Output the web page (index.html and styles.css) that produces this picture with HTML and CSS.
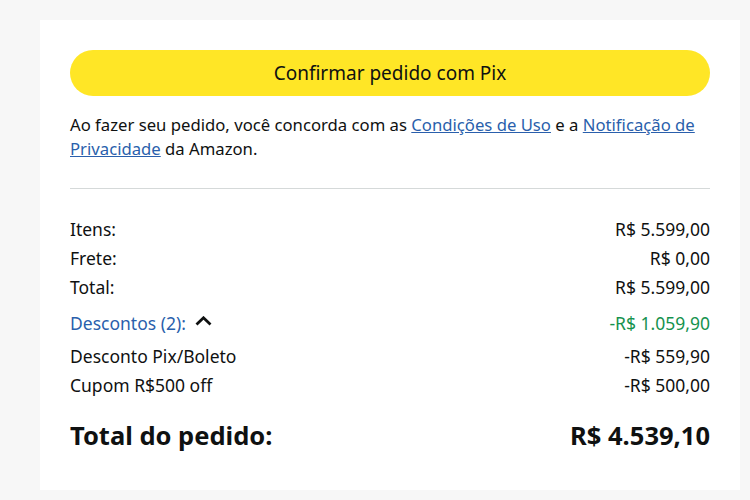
FILE: index.html
```html
<!DOCTYPE html>
<html lang="pt-BR">

<head>
    <meta charset="UTF-8">
    <title>Resumo do pedido</title>
    <link rel="stylesheet" href="styles.css">
</head>

<body>
    <div class="box">
        <button class="btn-pix">Confirmar pedido com Pix</button>
        <p class="aviso">
            Ao fazer seu pedido, você concorda com as <a href="#">Condições de Uso</a> e a
            <a href="#">Notificação de Privacidade</a> da Amazon.
        </p>
        <hr class="linha">
        <div class="resumo">
            <div class="row"><span>Itens:</span><span>R$ 5.599,00</span></div>
            <div class="row"><span>Frete:</span><span>R$ 0,00</span></div>
            <div class="row"><span>Total:</span><span>R$ 5.599,00</span></div>
            <div class="row desc">
                <span class="desc-label">Descontos (2):
                    <svg class="seta" width="17" height="10" viewBox="0 0 17 10">
                        <path d="M1.5 8.5 L8.5 1.8 L15.5 8.5" fill="none" stroke="#0f1111" stroke-width="2.8" />
                    </svg>
                </span>
                <span class="verde">-R$ 1.059,90</span>
            </div>
            <div class="row"><span>Desconto Pix/Boleto</span><span>-R$ 559,90</span></div>
            <div class="row"><span>Cupom R$500 off</span><span>-R$ 500,00</span></div>
        </div>
        <div class="row total"><span>Total do pedido:</span><span>R$ 4.539,10</span></div>
    </div>
</body>

</html>
```

FILE: styles.css
```css
* {
    padding: 0;
    margin: 0;
    box-sizing: border-box;
}

body {
    background-color: #f7f7f7;
    font-family: "Noto Sans", sans-serif;
    color: #0f1111;
    padding: 20px 10px 10px 40px;
}

.box {
    background: #fff;
    width: 700px;
    height: 470px;
    padding: 30px 30px 0 30px;
}

.btn-pix {
    width: 640px;
    height: 46px;
    border: none;
    border-radius: 23px;
    background: #ffe626;
    font-family: inherit;
    font-size: 19px;
    color: #0f1111;
}

.aviso {
    margin-top: 17px;
    font-size: 16.7px;
    line-height: 24px;
}

.aviso a {
    color: #2a5fac;
}

.linha {
    border: none;
    border-top: 1px solid #d5d9d9;
    margin-top: 27px;
}

.resumo {
    margin-top: 25px;
    font-size: 17.5px;
}

.row {
    display: flex;
    justify-content: space-between;
    align-items: center;
    height: 29px;
}

.row.desc {
    height: 36px;
    margin-top: 4px;
}

.desc-label {
    color: #2a5fac;
    display: flex;
    align-items: center;
    gap: 9px;
}

.seta {
    margin-top: -5px;
}

.verde {
    color: #15924e;
}

.total {
    margin-top: 21px;
    font-size: 25.5px;
    font-weight: bold;
}
```
